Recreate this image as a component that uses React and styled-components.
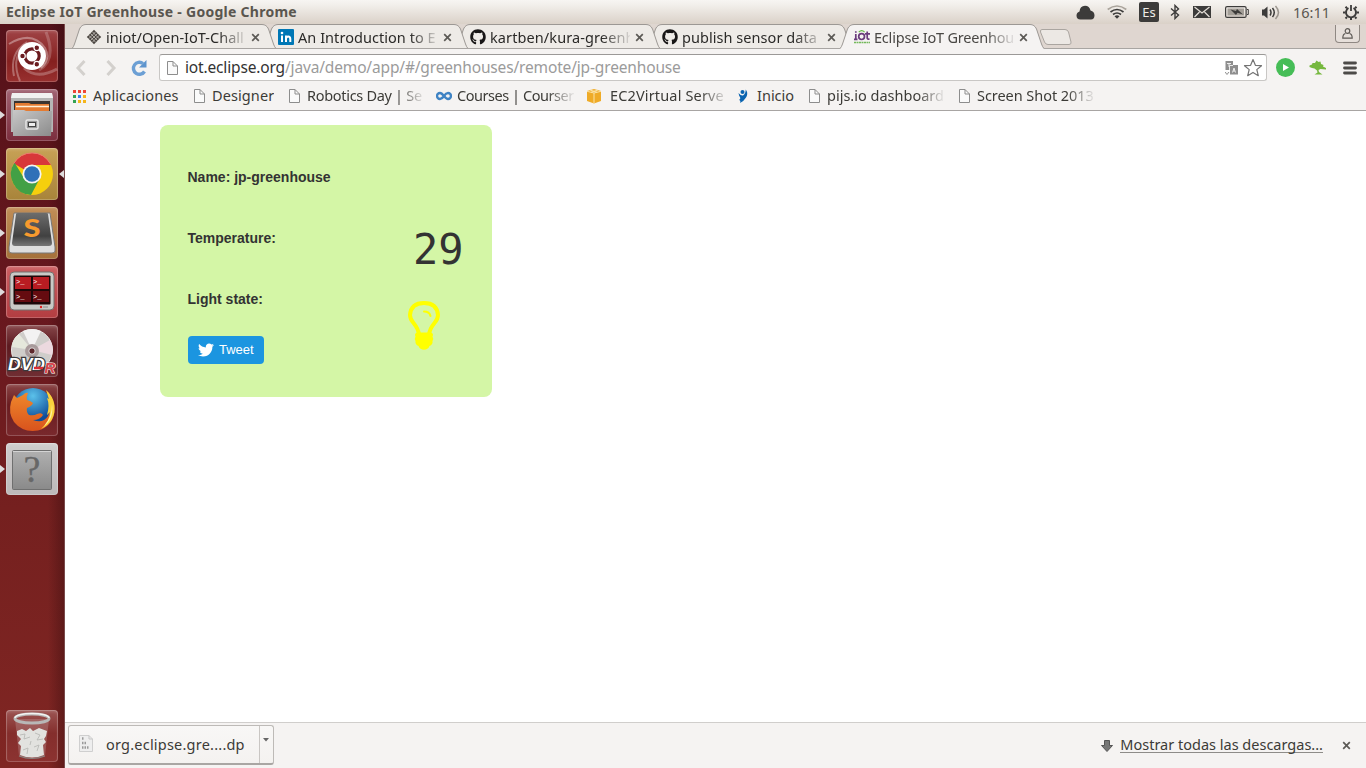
import React from "react";
import styled, { createGlobalStyle } from "styled-components";
import { FaTwitter, FaGithub } from "react-icons/fa";

const Global = createGlobalStyle`
  * { box-sizing: border-box; }
  body { margin: 0; background: #fff; overflow: hidden; }
  svg { display: block; flex: none; }
`;

const Desktop = styled.div`
  width: 1366px;
  height: 768px;
  display: flex;
  flex-direction: column;
  font-family: "Noto Sans", "Open Sans", sans-serif;
  font-size: 14.5px;
  color: #3c3b37;
`;

const Text = styled.span`
  white-space: nowrap;
  letter-spacing: ${(p) => p.$ls || 0}px;
`;

/* ---------- system panel ---------- */
const Panel = styled.header`
  height: 24px;
  flex: none;
  display: flex;
  align-items: center;
  padding: 0 7px 0 6px;
  background: linear-gradient(#f7f5f2 0, #f2efeb 20%, #dad1c8 100%);
  color: #5a564f;
`;
const WindowTitle = styled.h1`
  margin: 0;
  flex: 1;
  font-size: 14px;
  line-height: 22px;
  font-weight: 700;
  letter-spacing: ${(p) => p.$ls}px;
`;
const Indicators = styled.div`
  display: flex;
  align-items: center;
`;
const Indicator = styled.div`
  width: ${(p) => p.$w}px;
  display: flex;
  justify-content: ${(p) => p.$align || "center"};
`;
const Clock = styled(Text)`
  margin-bottom: 1px;
`;
const Keyboard = styled.div`
  width: 20px;
  height: 20px;
  border-radius: 2px;
  background: #3c3b3a;
  color: #eeebe6;
  font-size: 13px;
  line-height: 20px;
  text-align: center;
`;

const Body = styled.div`
  flex: 1;
  min-height: 0;
  display: flex;
`;

/* ---------- launcher ---------- */
const Launcher = styled.nav`
  width: 65px;
  flex: none;
  display: flex;
  flex-direction: column;
  gap: 7px;
  padding: 6px 0 6px 0;
  border-right: 1px solid #7a4a4b;
  background:
    linear-gradient(90deg, transparent 48px, rgba(40, 8, 10, 0.35) 64px),
    linear-gradient(#55121a 0, #5c141b 15%, #6b191f 45%, #75201f 65%, #802623 100%);
`;
const LauncherSlot = styled.div`
  height: 52px;
  display: flex;
  align-items: center;
  margin-top: ${(p) => (p.$last ? "auto" : 0)};
`;
const Running = styled.i`
  width: 6px;
  height: 0;
  border: 4px solid transparent;
  border-left: 5px solid ${(p) => (p.$on ? "#dedcdc" : "transparent")};
  border-right: 0;
`;
const Focused = styled.i`
  margin-left: auto;
  border: 4px solid transparent;
  border-right: 5px solid #dedcdc;
  border-left: 0;
`;
const Tile = styled.div`
  width: 52px;
  height: 52px;
  border-radius: 4px;
  overflow: hidden;
  background: ${(p) => p.$bg};
  box-shadow: inset 0 0 0 1px rgba(255, 255, 255, 0.2), inset 0 2px 3px rgba(255, 255, 255, 0.15);
`;

/* ---------- browser ---------- */
const Browser = styled.main`
  flex: 1;
  min-width: 0;
  display: flex;
  flex-direction: column;
`;
const TabStrip = styled.div`
  height: 25px;
  flex: none;
  display: flex;
  padding-left: 7px;
  background: linear-gradient(#dfd6d0, #dfd6d0 24px, #a8a5a2 24px);
`;
const TabBox = styled.div`
  width: 204px;
  height: 25px;
  margin-right: -12px;
  flex: none;
  display: grid;
  position: relative;
  z-index: ${(p) => p.$z};
`;
const TabShape = styled.svg`
  grid-area: 1 / 1;
`;
const TabContent = styled.div`
  grid-area: 1 / 1;
  display: flex;
  align-items: center;
  padding: 1px 0 0 14px;
  color: ${(p) => (p.$active ? "#4a4845" : "#2b2a28")};
`;
const TabTitle = styled.span`
  width: 140px;
  margin: 0 5px 1px 4px;
  overflow: hidden;
  white-space: nowrap;
  line-height: 22px;
  letter-spacing: ${(p) => p.$ls || 0}px;
  mask-image: linear-gradient(90deg, #000 112px, transparent 143px);
`;
const NewTab = styled.div`
  padding: 5px 0 0 7px;
`;
const UserButton = styled.div`
  width: 25px;
  height: 18px;
  margin: 1px 6px 0 auto;
  border: 1px solid #8f8883;
  border-top: 0;
  border-radius: 0 0 4px 4px;
  display: flex;
  justify-content: center;
  align-items: center;
  background: #e6dfda;
`;
const Toolbar = styled.div`
  height: 35px;
  flex: none;
  display: flex;
  align-items: center;
  padding: 2px 0 0 8px;
  background: #f5f3f2;
`;
const NavButton = styled.div`
  width: ${(p) => p.$w}px;
  margin-left: ${(p) => p.$ml || 0}px;
  flex: none;
  display: flex;
  justify-content: center;
`;
const Omnibox = styled.div`
  width: 1108px;
  height: 27px;
  flex: none;
  margin-left: 11px;
  display: flex;
  align-items: center;
  gap: 4px;
  padding: 0 3px 0 4px;
  border: 1px solid #c9c7c5;
  border-top-color: #9b9997;
  border-radius: 3px;
  background: #fff;
`;
const Url = styled.div`
  flex: 1;
  margin: 0 0 2px 1px;
  font-size: 15.5px;
  line-height: 22px;
  letter-spacing: ${(p) => p.$ls}px;
  color: #9b9b9b;
  white-space: nowrap;
  b { font-weight: 400; color: #333; }
`;
const Bookmarks = styled.div`
  height: 27px;
  flex: none;
  display: flex;
  align-items: center;
  padding: 0 0 3px 7px;
  background: #f5f3f2;
  border-bottom: 1px solid #a8a5a3;
`;
const Bookmark = styled.div`
  width: ${(p) => p.$w}px;
  flex: none;
  display: flex;
  align-items: center;
  gap: ${(p) => p.$gap || 5}px;
`;
const BookmarkTitle = styled.span`
  max-width: 117px;
  margin-bottom: 2px;
  overflow: hidden;
  white-space: nowrap;
  line-height: 20px;
  letter-spacing: ${(p) => p.$ls || 0}px;
  mask-image: ${(p) => (p.$fade ? "linear-gradient(90deg, #000 90px, transparent 119px)" : "none")};
`;

/* ---------- page ---------- */
const Page = styled.section`
  flex: 1;
  background: #fff;
  padding: 14px 0 0 95px;
`;
const Card = styled.article`
  width: 332px;
  height: 272px;
  padding: 42px 28.5px 0 27.5px;
  border-radius: 8px;
  background: #d4f6a6;
  color: #333;
  font-family: "Liberation Sans", Arial, sans-serif;
  font-size: 14px;
  font-weight: 700;
`;
const Field = styled.div`
  height: ${(p) => p.$h}px;
  display: flex;
  justify-content: space-between;
  line-height: 20px;
`;
const Temperature = styled.span`
  font-family: "DejaVu Sans Mono", monospace;
  font-size: 42px;
  font-weight: 400;
  line-height: 44px;
`;
const Lamp = styled.div`
  padding: 12px 23.5px 0 0;
`;
const Tweet = styled.button`
  width: 76px;
  height: 28px;
  margin-left: 0.5px;
  padding: 0 0 1px 10px;
  border: 0;
  border-radius: 4px;
  display: flex;
  align-items: center;
  gap: 5px;
  background: #1b95e0;
  color: #fff;
  font: 13px "Liberation Sans", Arial, sans-serif;
`;

/* ---------- downloads ---------- */
const Downloads = styled.footer`
  height: 46px;
  flex: none;
  display: flex;
  align-items: center;
  padding: 0 15px 0 3px;
  border-top: 1px solid #d0cecc;
  background: #f5f3f2;
`;
const DownloadItem = styled.div`
  width: 206px;
  height: 40px;
  margin-top: -1px;
  display: flex;
  border: 1px solid #bdbab7;
  border-bottom: 2px solid #a9a6a3;
  border-radius: 3px;
  background: linear-gradient(#f8f7f6, #f4f2f0);
`;
const DownloadFile = styled.div`
  width: 191px;
  display: flex;
  align-items: center;
  padding: 0 0 2px 10px;
  gap: 13px;
  border-right: 1px solid #c9c6c3;
`;
const DownloadMenu = styled.div`
  flex: 1;
  padding: 12px 0 0 3px;
`;
const DownloadArrow = styled.svg`
  margin-left: auto;
`;
const ShowAll = styled.a`
  margin: 0 19px 2px 7px;
  line-height: 16px;
  border-bottom: 1px solid #8e8c89;
`;

const Doc = () => (
  <svg width="16" height="16" viewBox="0 0 16 16">
    <path d="M3.5 1.5H9L13.5 6V14.5H3.5Z" fill="#fafafa" stroke="#8d8d8d" />
    <path d="M9 1.5V6H13.5" fill="none" stroke="#8d8d8d" />
  </svg>
);
const Close = () => (
  <svg width="9" height="9" viewBox="0 0 9 9">
    <path d="M1.2 1.2L7.8 7.8M7.8 1.2L1.2 7.8" stroke="#5c5a56" strokeWidth="1.7" />
  </svg>
);
const Diamond = () => (
  <svg width="16" height="16" viewBox="0 0 16 16">
    <path d="M8 .8L15.2 8L8 15.2L.8 8Z" fill="#4a4541" />
    <path d="M4.4 4.4L11.6 11.6M6.2 2.6L13.4 9.8M2.6 6.2L9.8 13.4M9.8 2.6L2.6 9.8M11.6 4.4L4.4 11.6M13.4 6.2L6.2 13.4" stroke="#d9d4cf" strokeWidth=".7" />
  </svg>
);
const LinkedIn = () => (
  <svg width="16" height="16" viewBox="0 0 16 16">
    <rect width="16" height="16" rx="1" fill="#0077b5" />
    <path d="M4 6.5V13M8 13V6.5M8 10Q8 7.5 10.2 7.5Q12.3 7.5 12.3 10V13" fill="none" stroke="#fff" strokeWidth="2" />
    <circle cx="4" cy="4" r="1.3" fill="#fff" />
  </svg>
);
const IotIcon = () => (
  <svg width="16" height="16" viewBox="0 0 16 16">
    <path d="M1.8 5V11M1.8 2.2V3.7M13.2 2.5V9Q13.2 10.3 15.5 10.2M11 4.8H16M0 10.3H3.5" stroke="#6a3c7c" strokeWidth="1.7" fill="none" />
    <circle cx="7.6" cy="7.6" r="2.9" fill="none" stroke="#6a3c7c" strokeWidth="1.7" />
    <path d="M4.8 3.2Q7.7 .2 10.6 3.2" fill="none" stroke="#65b946" strokeWidth="1.2" />
    <path d="M0 13.5H16" stroke="#75b95c" strokeWidth="1.6" strokeDasharray="2 .5" />
  </svg>
);
const Apps = () => (
  <svg width="16" height="16" viewBox="0 0 16 16">
    {["#ef4537", "#ef4537", "#ef4537", "#34a352", "#3b7ded", "#f5b51a", "#34a352", "#f5b51a", "#f5b51a"].map((c, i) => (
      <rect key={i} x={1 + (i % 3) * 5} y={2 + Math.floor(i / 3) * 5} width="3" height="3" fill={c} />
    ))}
  </svg>
);
const Coursera = () => (
  <svg width="16" height="16" viewBox="0 0 16 16">
    <path d="M8 8C6 5.5 5.4 5 4 5A3 3 0 0 0 4 11C6 11 7 9.5 8 8S10 5 12 5A3 3 0 0 1 12 11C10.6 11 9.8 10.2 8 8" fill="none" stroke="#3f83c4" strokeWidth="2.4" />
  </svg>
);
const Ec2 = () => (
  <svg width="16" height="16" viewBox="0 0 16 16">
    <path d="M1 3L8 1L15 3V13L8 15.5L1 13Z" fill="#efab27" />
    <path d="M1 3.3L8 5L15 3.3M8 5V15M4 2L11 4.2M12 2L5 4.2" stroke="#fbe3a8" fill="none" />
  </svg>
);
const Inicio = () => (
  <svg width="16" height="16" viewBox="0 0 16 16">
    <circle cx="6.5" cy="4" r="2" fill="#0b64b0" />
    <path d="M2.5 5Q5 8 7 7.5Q9.5 6 9.8 1.5Q12.5 5.5 10 9.5Q8 13 4 15Q5 12.5 3.2 12Q5 10.5 4 9Q3 8 2.5 5Z" fill="#0b64b0" />
  </svg>
);

const UbuntuTile = () => (
  <svg width="52" height="52" viewBox="0 0 52 52">
    <g fill="none" stroke="#fff">
      <path d="M3 14Q26 0 39 18Q45 29 35 38" opacity=".35" strokeWidth="2" />
      <path d="M40 2Q51 30 33 40" opacity=".2" strokeWidth="3" />
      <path d="M8 46Q3 23 21 12M14 51Q5 30 17 17" opacity=".3" strokeWidth="2" />
      <path d="M18 38Q31 50 51 39" opacity=".25" strokeWidth="3" />
    </g>
    <circle cx="26" cy="26" r="14" fill="#fff" />
    <circle cx="26" cy="26" r="7.2" fill="none" stroke="#6b1b1f" strokeWidth="3.2" />
    <g stroke="#fff" strokeWidth="1.2" fill="#6b1b1f">
      <circle cx="16.5" cy="26" r="2.8" />
      <circle cx="30.8" cy="17.8" r="2.8" />
      <circle cx="30.8" cy="34.2" r="2.8" />
    </g>
  </svg>
);
const FilesTile = () => (
  <svg width="52" height="52" viewBox="0 0 52 52">
    <defs>
      <linearGradient id="fg" x1="0" y1="0" x2="1" y2="1"><stop stopColor="#c8c8c8" /><stop offset="1" stopColor="#8b8b8b" /></linearGradient>
    </defs>
    <path d="M6 4H46L47 9V43H5V9Z" fill="#b6b6b6" />
    <path d="M6 4H46L47 9H5Z" fill="#f1f1f1" />
    <path d="M8 12H44V22H8Z" fill="#393431" />
    <path d="M9 14H23L25 15H43V22H9Z" fill="#e47b31" />
    <path d="M10 17.5H43" stroke="#fff0d8" strokeWidth="1.5" />
    <path d="M7 21H18L20 22H46L45 47H7Z" fill="url(#fg)" />
    <rect x="20" y="31" width="12" height="9" rx="1.5" fill="#999" stroke="#e7e7e7" strokeWidth="1.5" />
    <rect x="22.5" y="33.5" width="7" height="4" fill="#eee" stroke="#444" />
  </svg>
);
const ChromeTile = () => (
  <svg width="52" height="52" viewBox="0 0 52 52">
    <circle cx="26" cy="26" r="21" fill="#f5cf0d" />
    <path d="M26 26L7.8 15.5A21 21 0 0 1 44.9 17H26Z" fill="#d8373a" />
    <path d="M8.5 14.4A21 21 0 0 0 25 47L34 30L18.2 30.5Z" fill="#42a045" />
    <path d="M7.8 15.5A21 21 0 0 1 44.2 15.5" stroke="#ea7773" strokeWidth="1" fill="none" />
    <circle cx="26" cy="26" r="9.6" fill="#f4f4f4" />
    <circle cx="26" cy="26" r="7.8" fill="#2f70b8" />
  </svg>
);
const SublimeTile = () => (
  <svg width="52" height="52" viewBox="0 0 52 52">
    <defs>
      <linearGradient id="sg" x1="0" y1="0" x2="0" y2="1"><stop stopColor="#6c6c6c" /><stop offset=".7" stopColor="#414141" /><stop offset="1" stopColor="#777" /></linearGradient>
    </defs>
    <path d="M8 6H44L49 40V44Q49 46 46 46H6Q3 46 3 44V40Z" fill="#dedede" stroke="#777" />
    <path d="M10 7Q10 6 12 6H40Q42 6 42 7L46 36Q46 39 43 39H9Q6 39 6 36Z" fill="url(#sg)" />
    <text x="17.5" y="29.5" fontFamily="Lato, sans-serif" fontWeight="900" fontSize="24" textLength="17" lengthAdjust="spacingAndGlyphs" fill="#f89a2e">S</text>
  </svg>
);
const TerminatorTile = () => (
  <svg width="52" height="52" viewBox="0 0 52 52">
    <rect x="4" y="6" width="44" height="38" rx="4" fill="#c9c9c5" stroke="#73716e" />
    <rect x="7.5" y="9.5" width="37" height="29" rx="1" fill="#1d0708" />
    <rect x="9" y="11" width="16" height="12" fill="#b81c22" /><rect x="27" y="11" width="16" height="12" fill="#b81c22" />
    <rect x="9" y="25" width="16" height="11" fill="#650b10" /><rect x="27" y="25" width="16" height="11" fill="#650b10" />
    <g fontFamily="Liberation Mono, monospace" fontSize="7" fill="#fff">
      <text x="10" y="18">&gt;_</text><text x="27" y="18">&gt;_</text><text x="10" y="33">&gt;_</text><text x="27" y="33">&gt;_</text>
    </g>
    <circle cx="35" cy="41" r="1.2" fill="#e02020" /><path d="M37 41H42" stroke="#888" />
  </svg>
);
const DvdTile = () => (
  <svg width="52" height="52" viewBox="0 0 52 52">
    <circle cx="26" cy="25" r="20.5" fill="#cfcdca" stroke="#e9e9e7" />
    <path d="M26 25L17 6Q26 2 35 6Z" fill="#f3f2f2" /><path d="M26 25L44 15A20 20 0 0 1 46 30Z" fill="#ecd9df" />
    <path d="M26 25L6 22Q6 14 13 9Z" fill="#e5e8dc" />
    <circle cx="26" cy="26" r="7" fill="#a89a9b" /><circle cx="26" cy="26" r="3.2" fill="#5e282d" stroke="#ddd" />
    <g fontFamily="Liberation Sans, sans-serif" fontWeight="700" fontStyle="italic" strokeWidth="2.4" paintOrder="stroke">
      <text x="2" y="45" fontSize="16" textLength="37" lengthAdjust="spacingAndGlyphs" fill="#fff" stroke="#39383a">DVD</text>
      <text x="38.5" y="48" fontSize="15" fill="#d9444b" stroke="#fff" strokeWidth="1">R</text>
    </g>
    <path d="M28 43H37" stroke="#d92c34" strokeWidth="2.5" />
  </svg>
);
const FirefoxTile = () => (
  <svg width="52" height="52" viewBox="0 0 52 52">
    <defs>
      <radialGradient id="ff" cx=".5" cy=".2" r=".6"><stop stopColor="#5bc1ea" /><stop offset="1" stopColor="#0e4c99" /></radialGradient>
      <linearGradient id="fo" x1="0" y1="0" x2="0" y2="1"><stop stopColor="#f08a2c" /><stop offset="1" stopColor="#d9531d" /></linearGradient>
    </defs>
    <circle cx="27" cy="24" r="20" fill="url(#ff)" />
    <path d="M41 7Q49 15 48.5 28Q46 43 32 46.5Q17 49 8 38Q2 29 5 18L8 11L11 14L17 11Q20 8 22 9Q20 13 21 16Q25 17 27 19Q26 22 21 24Q20 28 23 31Q28 32 31 30Q36 28 37 31Q34 36 27 36Q37 40 42 32Q46 24 43 15Z" fill="url(#fo)" />
    <path d="M40 6Q47 12 48.5 21Q50 38 35 45Q44 37 44 28L41 31Q44 21 41 14L43 15Z" fill="#f9d13c" />
    <path d="M46 20Q48 35 38 42Q46 33 46 20Z" fill="#fff3a0" />
  </svg>
);
const UnknownTile = () => (
  <svg width="52" height="52" viewBox="0 0 52 52">
    <defs>
      <linearGradient id="ug" x1="0" y1="0" x2="0" y2="1"><stop stopColor="#b0b0b0" /><stop offset="1" stopColor="#8a8a8a" /></linearGradient>
    </defs>
    <rect x="6.5" y="7.5" width="39" height="39" rx="1" fill="url(#ug)" stroke="#6f6f6f" />
    <path d="M7 8.5H45" stroke="#d4d4d4" />
    <text x="26" y="39" textAnchor="middle" fontFamily="Liberation Serif, serif" fontSize="38" fill="#676767" stroke="#676767" strokeWidth=".3">?</text>
  </svg>
);
const TrashTile = () => (
  <svg width="52" height="52" viewBox="0 0 52 52">
    <path d="M9 9L13 46Q26 51 39 46L43 9Z" fill="#d7c4c2" opacity=".25" />
    <path d="M11 21L16 19L20 21L24 18L27 21L33 18L41 21L40 26L38 29L40 32L37 35L38 45Q26 50 14 45L15 36L12 33L15 29L11 25Z" fill="#e2e2df" />
    <path d="M14 25L19 24L18 29L24 27M29 23L34 25L31 30L37 29M28 37L33 35L31 41M17 40L22 38L21 44M25 31L24 35" fill="none" stroke="#b9bab7" strokeWidth=".9" />
    <ellipse cx="26" cy="8.5" rx="17" ry="4.5" fill="none" stroke="#b8b8b7" strokeWidth="3" />
    <path d="M9 8A17 4.5 0 0 1 43 8" fill="none" stroke="#f3f3f2" strokeWidth="1.5" />
    <path d="M13 46Q26 51 39 46" fill="none" stroke="#8a807d" strokeWidth="1.2" />
  </svg>
);

const tiles = [
  { Icon: UbuntuTile, bg: "linear-gradient(#a04446, #85201f 60%, #98302f)" },
  { Icon: FilesTile, bg: "linear-gradient(#a06272, #7b2d3d)", on: true },
  { Icon: ChromeTile, bg: "linear-gradient(#c7a156, #a8843a)", on: true, focus: true },
  { Icon: SublimeTile, bg: "linear-gradient(#c08d57, #a5713a)", on: true },
  { Icon: TerminatorTile, bg: "linear-gradient(#cb5e61, #b33d41)", on: true },
  { Icon: DvdTile, bg: "linear-gradient(#87484b, #5d1a20 40%, #702e33)" },
  { Icon: FirefoxTile, bg: "linear-gradient(#8a4546, #6a1c20 40%, #79292d)" },
  { Icon: UnknownTile, bg: "linear-gradient(#cfcccc, #bdbaba)", on: true },
  { Icon: TrashTile, bg: "linear-gradient(#9c5553, #842e2c 45%, #8c3331)", last: true },
];

const tabs = [
  { title: "iniot/Open-IoT-Chall", icon: <Diamond />, ls: 0.02 },
  { title: "An Introduction to E", icon: <LinkedIn />, ls: 0.05 },
  { title: "kartben/kura-greenh", icon: <FaGithub size={16} color="#181616" />, ls: 0.1 },
  { title: "publish sensor data", icon: <FaGithub size={16} color="#181616" />, ls: 0.05 },
  { title: "Eclipse IoT Greenhou", icon: <IotIcon />, active: true, ls: -0.2 },
];

const bookmarks = [
  { title: "Aplicaciones", icon: <Apps />, w: 119, ls: 0.1 },
  { title: "Designer", icon: <Doc />, w: 95, ls: 0.1 },
  { title: "Robotics Day | Se", icon: <Doc />, w: 150, fade: true, ls: -0.3 },
  { title: "Courses | Courser", icon: <Coursera />, w: 150, fade: true, ls: -0.45 },
  { title: "EC2Virtual Serve", icon: <Ec2 />, w: 150, fade: true, gap: 8, ls: 0.15 },
  { title: "Inicio", icon: <Inicio />, w: 70 },
  { title: "pijs.io dashboard", icon: <Doc />, w: 150, fade: true, ls: 0 },
  { title: "Screen Shot 2013", icon: <Doc />, w: 138, fade: true, ls: -0.05 },
];

const Tab = ({ tab, z }) => (
  <TabBox $z={z}>
    <TabShape width="204" height="25" viewBox="0 0 204 25">
      <path
        d="M0 25Q1.5 23 2.5 20L7.5 5Q9.5 .5 14 .5H190Q194.5 .5 196.5 5L201.5 20Q202.5 23 204 25Z"
        fill={tab.active ? "#f5f3f2" : "#eeebe7"}
      />
      <path
        d="M0 24.5Q1.5 23 2.5 20L7.5 5Q9.5 .5 14 .5H190Q194.5 .5 196.5 5L201.5 20Q202.5 23 204 24.5"
        fill="none"
        stroke="#9c9894"
      />
      {!tab.active && <path d="M0 24.5H204" stroke="#a8a5a2" />}
    </TabShape>
    <TabContent $active={tab.active}>
      {tab.icon}
      <TabTitle $ls={tab.ls}>{tab.title}</TabTitle>
      <Close />
    </TabContent>
  </TabBox>
);

const INK = "#3c3b3a";

export default function App() {
  return (
    <Desktop>
      <Global />
      <Panel>
        <WindowTitle $ls={0.27}>Eclipse IoT Greenhouse - Google Chrome</WindowTitle>
        <Indicators>
          <Indicator $w={32}>
            <svg width="19" height="15" viewBox="0 0 19 15"><path d="M4.5 14.5Q.5 14.5 .5 10.5Q.5 7.5 3.5 6.5Q4 1 9 .8Q13.5 .8 14.5 5.5Q18.5 6.5 18.5 10.5Q18.3 14.5 15 14.5Z" fill={INK} /></svg>
          </Indicator>
          <Indicator $w={32}>
            <svg width="20" height="14" viewBox="0 0 20 14" fill="none" strokeWidth="1.7">
              <path d="M.7 4.5Q10-2.5 19.3 4.5" stroke="#aaa49c" /><path d="M3.5 7Q10 2 16.5 7M6 9.5Q10 6.5 14 9.5" stroke={INK} /><path d="M7.5 11.2L10 13.8L12.5 11.2Q10 9.5 7.5 11.2Z" fill={INK} />
            </svg>
          </Indicator>
          <Indicator $w={32}><Keyboard>Es</Keyboard></Indicator>
          <Indicator $w={20}>
            <svg width="10" height="16" viewBox="0 0 10 16"><path d="M1 4.5L8.5 11L5 14.5V1.5L8.5 5L1 11.5" fill="none" stroke={INK} strokeWidth="1.4" /></svg>
          </Indicator>
          <Indicator $w={34}>
            <svg width="18" height="12" viewBox="0 0 18 12"><rect width="18" height="12" fill={INK} /><path d="M1.5 1L9 7L16.5 1M1.5 11L6.5 6M16.5 11L11.5 6" fill="none" stroke="#e6e0da" strokeWidth="1.2" /></svg>
          </Indicator>
          <Indicator $w={36}>
            <svg width="24" height="12" viewBox="0 0 24 12"><rect x=".6" y=".6" width="20.5" height="10.8" rx="1.5" fill="none" stroke={INK} strokeWidth="1.2" /><rect x="2.5" y="2.5" width="16.5" height="7" fill="#a39e97" /><path d="M22 3.5H23.3V8.5H22" fill="none" stroke={INK} /><path d="M5.5 3.5L11 5L12 3L18 8.5L12.5 6.8L11 9Z" fill={INK} /></svg>
          </Indicator>
          <Indicator $w={32}>
            <svg width="20" height="15" viewBox="0 0 20 15" fill="none" strokeWidth="1.5"><path d="M1 4.5H3L6.5 1.5V13.5L3 10.5H1Z" fill={INK} /><path d="M9 4.5Q11 7.5 9 10.5M11.5 3Q15 7.5 11.5 12" stroke={INK} /><path d="M14.5 1Q20.5 7.5 14.5 14" stroke="#9b958e" /></svg>
          </Indicator>
          <Indicator $w={49}><Clock>16:11</Clock></Indicator>
          <Indicator $w={23} $align="flex-end">
            <svg width="16" height="16" viewBox="0 0 16 16" fill="none" stroke={INK}>
              <path d="M5.5 4A5 5 0 1 0 10.5 4" strokeWidth="1.9" /><path d="M8 1V7" strokeWidth="1.8" />
              <path d="M2.5 2.7L4 4.2M13.5 2.7L12 4.2M0 8.5H2.5M13.5 8.5H16M2.5 14.5L4 13M13.5 14.5L12 13M8 13.5V16" strokeWidth="2" />
            </svg>
          </Indicator>
        </Indicators>
      </Panel>
      <Body>
        <Launcher>
          {tiles.map(({ Icon, bg, on, focus, last }, i) => (
            <LauncherSlot key={i} $last={last}>
              <Running $on={on} />
              <Tile $bg={bg}><Icon /></Tile>
              {focus && <Focused />}
            </LauncherSlot>
          ))}
        </Launcher>
        <Browser>
          <TabStrip>
            {tabs.map((t, i) => <Tab key={t.title} tab={t} z={t.active ? 10 : 5 - i} />)}
            <NewTab>
              <svg width="34" height="16" viewBox="0 0 34 16"><path d="M3 .5H26Q28.5 .5 29.5 3L32 13Q32.5 15.5 30 15.5H9Q6.5 15.5 5.5 13L1.5 3Q1 .5 3 .5Z" fill="#ece8e4" stroke="#aaa5a0" /></svg>
            </NewTab>
            <UserButton>
              <svg width="11" height="11" viewBox="0 0 11 11" fill="none" stroke="#5e5a56" strokeWidth="1.2"><circle cx="5.5" cy="3" r="2.3" /><path d="M3.5 5.5Q.8 6 .8 10.2H10.2Q10.2 6 7.5 5.5" /></svg>
            </UserButton>
          </TabStrip>
          <Toolbar>
            <NavButton $w={15}>
              <svg width="12" height="18" viewBox="0 0 12 18"><path d="M9.5 2L3 9L9.5 16" fill="none" stroke="#d3d0cd" strokeWidth="3" /></svg>
            </NavButton>
            <NavButton $w={36} $ml={5}>
              <svg width="12" height="18" viewBox="0 0 12 18"><path d="M2.5 2L9 9L2.5 16" fill="none" stroke="#d3d0cd" strokeWidth="3" /></svg>
            </NavButton>
            <NavButton $w={19}>
              <svg width="18" height="18" viewBox="0 0 18 18"><path d="M14.5 12.5A6 6 0 1 1 13 4.5" fill="none" stroke="#6c9fd4" strokeWidth="3.4" /><path d="M16.5 1V8.5H9Z" fill="#5e94cd" /></svg>
            </NavButton>
            <Omnibox>
              <Doc />
              <Url $ls={-0.156}><b>iot.eclipse.org</b>/java/demo/app/#/greenhouses/remote/jp-greenhouse</Url>
              <svg width="14" height="14" viewBox="0 0 14 14"><path d="M.5 0H8V4H13V13.5H5V9H.5Z" fill="#8e8e8e" /><path d="M2 2.5H6M4 2V6M4.5 9V4.5H8M7.5 11.5L9 7L10.5 11.5M8 10H10M2 10V13M.5 11.5H3.5" fill="none" stroke="#f4f4f4" strokeWidth=".9" /><path d="M0 11L2 13.5L4 11" fill="none" stroke="#8e8e8e" /></svg>
              <svg width="20" height="20" viewBox="0 0 20 20"><path d="M10 1.5L12.4 7.3L18.5 7.7L13.8 11.6L15.3 17.7L10 14.4L4.7 17.7L6.2 11.6L1.5 7.7L7.6 7.3Z" fill="#fff" stroke="#747474" strokeWidth="1.2" strokeLinejoin="round" /></svg>
            </Omnibox>
            <NavButton $w={37}>
              <svg width="20" height="20" viewBox="0 0 20 20"><circle cx="9.5" cy="9.5" r="9.5" fill="#46bd57" /><path d="M7 6L13 9.5L7 13Z" fill="#fff" /></svg>
            </NavButton>
            <NavButton $w={27}>
              <svg width="18" height="16" viewBox="0 0 18 16"><path d="M.5 5.500L3 4.500L3.500 3L6 3L7.500 .5L9.500 2L11.500 1.500L12 4L14.500 5L14 6.500L17 8V9.500L11.500 9L9.500 10L10 12L13.500 14.500H5.500L8.500 12.500L8 10.500L5.500 8.500L3 8L.5 7Z" fill="#76b83f" /></svg>
            </NavButton>
            <NavButton $w={32} $ml={3}>
              <svg width="14" height="14" viewBox="0 0 14 14"><path d="M1.5 2H12.5M1.5 7H12.5M1.5 12H12.5" stroke="#4c4a48" strokeWidth="2.8" strokeLinecap="round" /></svg>
            </NavButton>
          </Toolbar>
          <Bookmarks>
            {bookmarks.map((b) => (
              <Bookmark key={b.title} $w={b.w} $gap={b.gap}>
                {b.icon}
                <BookmarkTitle $fade={b.fade} $ls={b.ls}>{b.title}</BookmarkTitle>
              </Bookmark>
            ))}
          </Bookmarks>
          <Page>
            <Card>
              <Field $h={61}>Name: jp-greenhouse</Field>
              <Field $h={61}>Temperature:<Temperature>29</Temperature></Field>
              <Field $h={47}>
                Light state:
                <Lamp>
                  <svg width="32" height="49" viewBox="0 0 32 49">
                    <path d="M11 34Q10.5 28 5.5 22Q2 18 2 14Q3 2 16 2Q29 2 30 14Q30 18 26.5 22Q21.5 28 21 34" fill="none" stroke="#ff0" strokeWidth="4" />
                    <path d="M16 10.5Q21.5 10.5 22.5 15" fill="none" stroke="#ff0" strokeWidth="2" strokeLinecap="round" />
                    <path d="M9 31.5H23Q26 32.5 24.5 35.5Q26 38 24.5 40Q25 43.5 21.5 45Q20 48.8 16 48.8T10.5 45Q7 43.5 7.5 40Q6 38 7.5 35.5Q6 32.5 9 31.5Z" fill="#ff0" />
                  </svg>
                </Lamp>
              </Field>
              <Tweet><FaTwitter size={16} />Tweet</Tweet>
            </Card>
          </Page>
          <Downloads>
            <DownloadItem>
              <DownloadFile>
                <svg width="14" height="17" viewBox="0 0 14 17"><path d="M.5 .5H10L13.5 4V16.5H.5Z" fill="#eee" stroke="#cfcfcf" /><path d="M10 .5V4H13.5" fill="none" stroke="#c7c7c7" /><path d="M3 3.5H4.5M3 8H7M3 12.5H9.5" stroke="#9a9a9a" strokeWidth="2.5" strokeDasharray="1.5 1" /></svg>
                <Text $ls={0.22}>org.eclipse.gre....dp</Text>
              </DownloadFile>
              <DownloadMenu><svg width="6" height="4" viewBox="0 0 6 4"><path d="M0 0H6L3 3.5Z" fill="#666" /></svg></DownloadMenu>
            </DownloadItem>
            <DownloadArrow width="12" height="12" viewBox="0 0 12 12"><path d="M3.5 .5H8.5V5.5H11.5L6 11.5L.5 5.5H3.5Z" fill="#777" stroke="#555" /></DownloadArrow>
            <ShowAll><Text>Mostrar todas las descargas...</Text></ShowAll>
            <Close />
          </Downloads>
        </Browser>
      </Body>
    </Desktop>
  );
}
